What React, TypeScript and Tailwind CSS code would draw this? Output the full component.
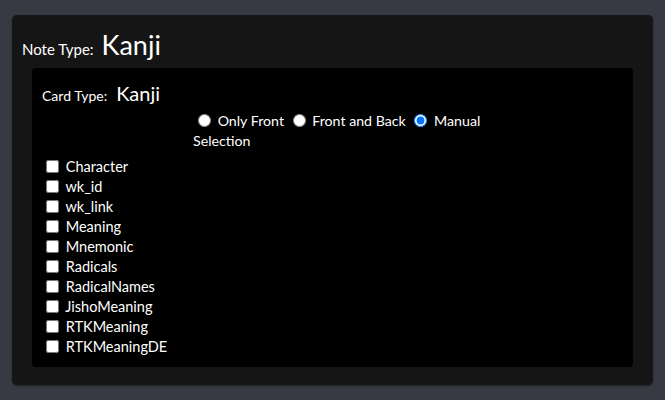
import { useState } from "react";

const fields = [
  "Character",
  "wk_id",
  "wk_link",
  "Meaning",
  "Mnemonic",
  "Radicals",
  "RadicalNames",
  "JishoMeaning",
  "RTKMeaning",
  "RTKMeaningDE",
];

const modes = ["Only Front", "Front and Back", "Manual Selection"];

export default function App() {
  const [mode, setMode] = useState("Manual Selection");
  const [checked, setChecked] = useState<Record<string, boolean>>({});

  return (
    <div className="min-h-[400px] bg-[#373a42] px-[12px] py-[15px] text-white font-['Lato','Noto_Sans',sans-serif]">
      <div className="h-[370px] rounded-[5px] bg-[#151515] px-[10px] pt-[14px] shadow-[0_1px_2px_rgba(0,0,0,0.4)]">
        <div className="flex items-baseline h-[32px]">
          <span className="text-[15px] leading-[32px] mr-[8px]">Note Type:</span>
          <span className="text-[27px] leading-[32px]">Kanji</span>
        </div>
        <div className="mx-[10px] mt-[7px] rounded-[4px] bg-black px-[10px] pt-[11px] pb-[10px]">
          <div className="flex items-baseline h-[28px]">
            <span className="text-[14px] leading-[28px] mr-[9px]">Card Type:</span>
            <span className="text-[20px] leading-[28px]">Kanji</span>
          </div>
          <div className="ml-[151px] w-[294px] text-[14.2px] leading-[20px] mt-[4px]">
            {modes.map((m) => (
              <label key={m}>
                <input
                  type="radio"
                  name="mode"
                  checked={mode === m}
                  onChange={() => setMode(m)}
                  className="ml-[5px] mr-[3px] mt-[3px] align-[-1px]"
                />{" "}
                {m.split(" ").map((w, i) => (
                  <span key={i}>
                    {i > 0 ? " " : ""}
                    {w}
                  </span>
                ))}{" "}
              </label>
            ))}
          </div>
          <div className="mt-[6px] text-[14.5px] leading-[20px]">
            {fields.map((f) => (
              <div key={f} className="h-[20px]">
                <label>
                  <input
                    type="checkbox"
                    checked={!!checked[f]}
                    onChange={() => setChecked({ ...checked, [f]: !checked[f] })}
                    className="ml-[4px] mr-[3px] align-[-1px]"
                  />{" "}
                  {f}
                </label>
              </div>
            ))}
          </div>
        </div>
      </div>
    </div>
  );
}
